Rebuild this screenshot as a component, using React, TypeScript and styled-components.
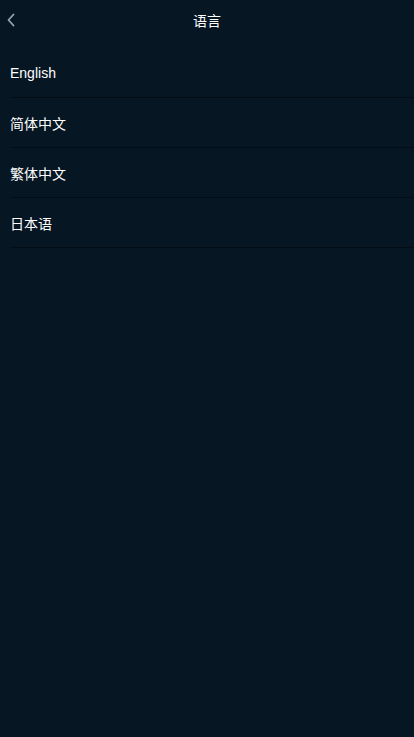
import styled, { createGlobalStyle } from "styled-components";

const LANGUAGES = ["English", "简体中文", "繁体中文", "日本语"];

const GlobalStyle = createGlobalStyle`
  html, body {
    margin: 0;
    padding: 0;
    background: #061623;
  }
  body {
    font-family: "Liberation Sans", Arial, "Noto Sans CJK SC", sans-serif;
  }
`;

export default function App() {
  return (
    <Page>
      <GlobalStyle />
      <Header>
        <BackButton aria-label="back">
          <svg width="10" height="14" viewBox="0 0 10 14" fill="none">
            <path d="M7.5 1.5L2.5 7l5 5.5" stroke="#9aa5b0" strokeWidth="1.8" strokeLinecap="round" strokeLinejoin="round" />
          </svg>
        </BackButton>
        <Title>语言</Title>
      </Header>
      <List>
        {LANGUAGES.map((lang) => (
          <Row key={lang}>{lang}</Row>
        ))}
      </List>
    </Page>
  );
}

const Page = styled.div`
  min-height: 737px;
  background: #061623;
  color: #ffffff;
`;

const Header = styled.div`
  position: relative;
  height: 40px;
  display: flex;
  align-items: center;
  justify-content: center;
`;

const BackButton = styled.button`
  position: absolute;
  left: 6px;
  top: 13px;
  padding: 0;
  border: none;
  background: none;
  display: flex;
`;

const Title = styled.div`
  font-size: 14px;
  color: #ffffff;
`;

const List = styled.div`
  padding: 8px 0 0 10px;
`;

const Row = styled.div`
  height: 49px;
  display: flex;
  align-items: center;
  font-size: 14px;
  color: #ffffff;
  border-bottom: 1px solid #020d15;
`;
